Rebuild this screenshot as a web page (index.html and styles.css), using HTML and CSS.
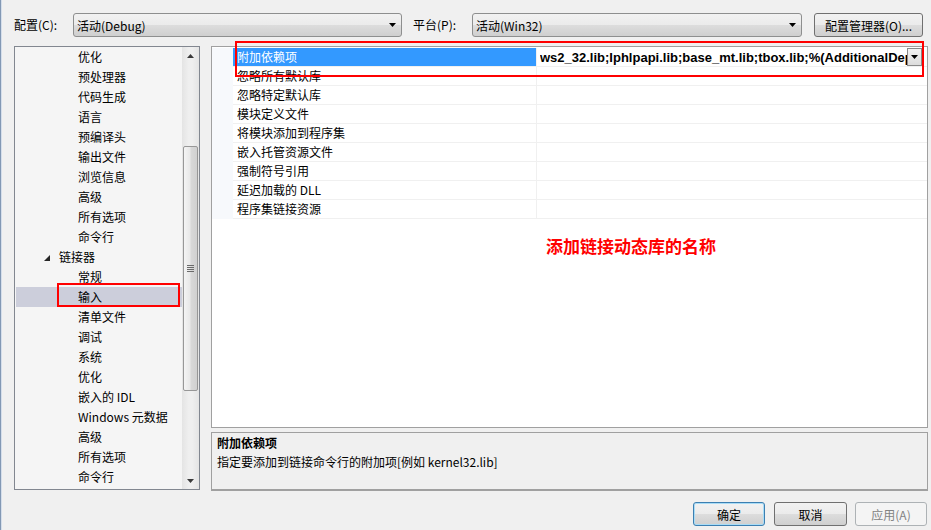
FILE: index.html
```html
<!DOCTYPE html>
<html lang="zh-CN">
<head>
  <meta charset="UTF-8">
  <title>属性页</title>
  <link rel="stylesheet" href="styles.css">
</head>
<body>
  <div class="dialog">
    <div class="topbar">
      <span class="label">配置(C):</span>
      <div class="combo combo-config">
        <span>活动(Debug)</span>
        <svg class="combo-arrow" width="7" height="4" viewBox="0 0 7 4"><polygon points="0,0 7,0 3.5,4" fill="#000"/></svg>
      </div>
      <span class="label label-platform">平台(P):</span>
      <div class="combo combo-platform">
        <span>活动(Win32)</span>
        <svg class="combo-arrow" width="7" height="4" viewBox="0 0 7 4"><polygon points="0,0 7,0 3.5,4" fill="#000"/></svg>
      </div>
      <button class="btn btn-manager">配置管理器(O)...</button>
    </div>

    <div class="content">
      <div class="tree">
        <ul class="tree-list">
          <li class="node child">优化</li>
          <li class="node child">预处理器</li>
          <li class="node child">代码生成</li>
          <li class="node child">语言</li>
          <li class="node child">预编译头</li>
          <li class="node child">输出文件</li>
          <li class="node child">浏览信息</li>
          <li class="node child">高级</li>
          <li class="node child">所有选项</li>
          <li class="node child">命令行</li>
          <li class="node parent">
            <svg class="expander" width="6" height="6" viewBox="0 0 6 6"><polygon points="6,0 6,6 0,6" fill="#262626"/></svg>链接器
          </li>
          <li class="node child">常规</li>
          <li class="node child selected">输入</li>
          <li class="node child">清单文件</li>
          <li class="node child">调试</li>
          <li class="node child">系统</li>
          <li class="node child">优化</li>
          <li class="node child">嵌入的 IDL</li>
          <li class="node child">Windows 元数据</li>
          <li class="node child">高级</li>
          <li class="node child">所有选项</li>
          <li class="node child">命令行</li>
        </ul>
        <div class="vscroll">
          <div class="scroll-btn">
            <svg width="7" height="4" viewBox="0 0 7 4"><polygon points="0,4 7,4 3.5,0" fill="#3a3a3a"/></svg>
          </div>
          <div class="thumb">
            <span class="grip"></span>
          </div>
          <div class="scroll-btn scroll-btn-down">
            <svg width="7" height="4" viewBox="0 0 7 4"><polygon points="0,0 7,0 3.5,4" fill="#3a3a3a"/></svg>
          </div>
        </div>
        <div class="mark mark-tree"></div>
      </div>

      <div class="right">
        <div class="grid">
          <div class="row selected">
            <div class="gutter"></div>
            <div class="name">附加依赖项</div>
            <div class="value">
              <span class="value-text">ws2_32.lib;Iphlpapi.lib;base_mt.lib;tbox.lib;%(AdditionalDependencies)</span>
              <span class="value-drop">
                <svg width="7" height="4" viewBox="0 0 7 4"><polygon points="0,0 7,0 3.5,4" fill="#000"/></svg>
              </span>
            </div>
          </div>
          <div class="row"><div class="gutter"></div><div class="name">忽略所有默认库</div><div class="value"></div></div>
          <div class="row"><div class="gutter"></div><div class="name">忽略特定默认库</div><div class="value"></div></div>
          <div class="row"><div class="gutter"></div><div class="name">模块定义文件</div><div class="value"></div></div>
          <div class="row"><div class="gutter"></div><div class="name">将模块添加到程序集</div><div class="value"></div></div>
          <div class="row"><div class="gutter"></div><div class="name">嵌入托管资源文件</div><div class="value"></div></div>
          <div class="row"><div class="gutter"></div><div class="name">强制符号引用</div><div class="value"></div></div>
          <div class="row"><div class="gutter"></div><div class="name">延迟加载的 DLL</div><div class="value"></div></div>
          <div class="row"><div class="gutter"></div><div class="name">程序集链接资源</div><div class="value"></div></div>

          <div class="mark mark-grid"></div>
          <div class="note">添加链接动态库的名称</div>
        </div>

        <div class="desc">
          <div class="desc-title">附加依赖项</div>
          <div class="desc-text">指定要添加到链接命令行的附加项[例如 kernel32.lib]</div>
        </div>
      </div>
    </div>

    <div class="footer">
      <button class="btn btn-default">确定</button>
      <button class="btn btn-cancel">取消</button>
      <button class="btn btn-disabled">应用(A)</button>
    </div>
  </div>
</body>
</html>
```

FILE: styles.css
```css
* {
  margin: 0;
  padding: 0;
  box-sizing: border-box;
}

html, body {
  width: 100%;
  height: 100%;
  overflow: hidden;
}

body {
  background: #f0f0f0;
  font-family: "Noto Sans CJK SC", "Noto Sans", sans-serif;
  font-size: 12px;
  color: #000;
  box-shadow: inset 1px 0 #8298b4, inset 2px 0 #d5deea;
}

.dialog {
  display: flex;
  flex-direction: column;
  padding: 13px 3px 0 14px;
}

/* top row: configuration / platform */
.topbar {
  display: flex;
  align-items: center;
  height: 24px;
  margin-bottom: 9px;
}

.label {
  width: 59px;
  line-height: 24px;
}

.label-platform {
  margin-left: 11px;
}

.combo {
  height: 24px;
  display: flex;
  align-items: center;
  justify-content: space-between;
  padding: 0 5px 0 3px;
  border: 1px solid #8e8f8f;
  border-radius: 3px;
  background: linear-gradient(#f2f2f2 0%, #ebebeb 50%, #dddddd 50%, #cfcfcf 100%);
}

.combo-config {
  width: 329px;
}

.combo-platform {
  width: 330px;
}

.btn {
  height: 24px;
  border: 1px solid #707070;
  border-radius: 3px;
  background: linear-gradient(#f2f2f2 0%, #ebebeb 50%, #dddddd 50%, #cfcfcf 100%);
  font: inherit;
  color: #000;
}

.btn-manager {
  width: 109px;
  margin-left: 12px;
}

/* main area */
.content {
  display: flex;
  gap: 11px;
  height: 445px;
}

.tree {
  position: relative;
  flex: 0 0 186px;
  height: 444px;
  display: flex;
  border: 1px solid #828790;
  background: #f5f5f5;
}

.tree-list {
  flex: 1;
  list-style: none;
}

.node {
  height: 20px;
  line-height: 20px;
  white-space: nowrap;
}

.child {
  padding-left: 63px;
}

.parent {
  display: flex;
  align-items: center;
  padding-left: 29px;
}

.expander {
  margin-right: 9px;
  margin-top: 2px;
}

.node.selected {
  background: #cccedb;
  margin-left: 1px;
  padding-left: 62px;
}

.vscroll {
  width: 17px;
  display: flex;
  flex-direction: column;
  background: linear-gradient(to right, #e4e4e4, #efefef 40%, #efefef 60%, #e4e4e4);
}

.scroll-btn {
  height: 17px;
  display: flex;
  align-items: center;
  justify-content: center;
}

.scroll-btn-down {
  margin-top: auto;
}

.thumb {
  margin: 82px 1px 0;
  height: 245px;
  display: flex;
  align-items: center;
  justify-content: center;
  border: 1px solid #979797;
  border-radius: 2px;
  background: linear-gradient(to right, #f4f4f4, #e8e8e8 45%, #d8d8d8 55%, #d0d0d0);
}

.grip {
  width: 7px;
  height: 7px;
  background: repeating-linear-gradient(#6a6a6a 0 1px, transparent 1px 2px);
}

.mark {
  position: absolute;
  border: 2px solid #ff0000;
}

.mark-tree {
  left: 42px;
  top: 236px;
  width: 123px;
  height: 24px;
}

/* property grid */
.right {
  flex: 1;
  min-width: 0;
  display: flex;
  flex-direction: column;
  gap: 4px;
}

.grid {
  position: relative;
  height: 382px;
  padding-top: 1px;
  border: 1px solid #a0a0a0;
  background: #fff;
}

.row {
  display: flex;
  height: 19px;
}

.gutter {
  flex: 0 0 21px;
  background: #f7f9fc;
}

.name {
  flex: 0 0 304px;
  padding-left: 4px;
  line-height: 18px;
  border-right: 1px solid #f0f0f0;
  border-bottom: 1px solid #f0f0f0;
  white-space: nowrap;
}

.value {
  flex: 1;
  display: flex;
  align-items: center;
  min-width: 0;
  padding: 0 5px 0 3px;
  border-bottom: 1px solid #f0f0f0;
}

.row.selected .name {
  background: #3399ff;
  color: #fff;
}

.value-text {
  flex: 1;
  min-width: 0;
  overflow: hidden;
  white-space: nowrap;
  font-family: "Liberation Sans", "Noto Sans", sans-serif;
  font-weight: bold;
  font-size: 13px;
}

.value-drop {
  flex: 0 0 15px;
  height: 18px;
  display: flex;
  align-items: center;
  justify-content: center;
  border: 1px solid #8a8a8a;
  background: linear-gradient(#f4f4f4, #dcdcdc);
}

.mark-grid {
  left: 23px;
  top: -6px;
  width: 689px;
  height: 36px;
}

.note {
  position: absolute;
  left: 334px;
  top: 189px;
  color: #ff0000;
  font-size: 17px;
  font-weight: bold;
  line-height: 20px;
}

/* description pane */
.desc {
  height: 59px;
  padding-left: 5px;
  border: 1px solid #a0a0a0;
  border-bottom-width: 2px;
  background: #f0f0f0;
  line-height: 19px;
}

.desc-title {
  font-weight: bold;
}

/* dialog buttons */
.footer {
  display: flex;
  justify-content: flex-end;
  margin: 11px 1px 0 0;
}

.footer .btn {
  width: 72px;
}

.btn-default {
  border-color: #3c7fb1;
  box-shadow: inset 0 0 0 1px #a9dcf6;
}

.btn-cancel {
  width: 73px !important;
  margin-left: 9px;
}

.btn-disabled {
  margin-left: 8px;
  border-color: #adb2b5;
  background: #f4f4f4;
  color: #838383;
}
```
